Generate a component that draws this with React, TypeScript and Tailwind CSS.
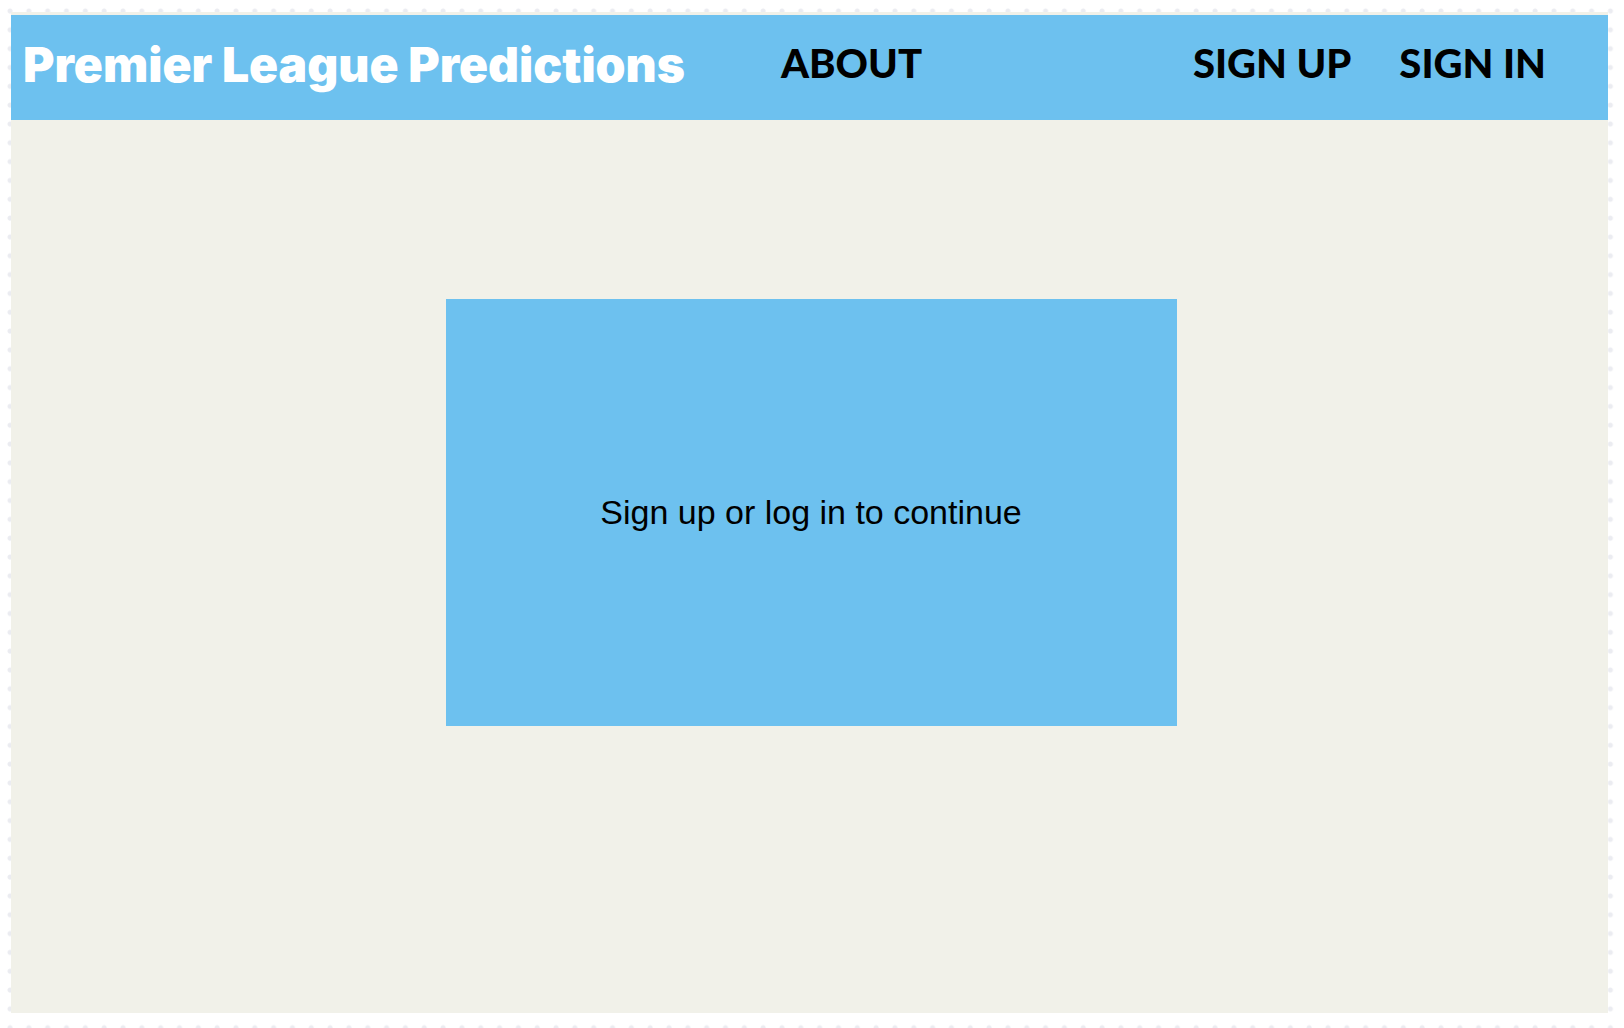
export default function App() {
  return (
    <div className="min-h-screen bg-white bg-[radial-gradient(circle_at_10px_11px,#ebecf1_2px,transparent_3px)] bg-[length:calc((100vw-4px)/86)_calc((100vw-4px)/86)] pt-3 pr-4 pb-[15px] pl-[11px]">
      <div className="flex min-h-[1001px] flex-col bg-[#f1f1e9] pt-[3px]">
        <header className="flex h-[105px] items-start bg-[#6dc1ef] pr-[62px] pl-3 whitespace-nowrap">
          <h1 className="pt-5 font-['Inter',sans-serif] text-[48px] leading-[60px] font-black text-white">
            Premier League Predictions
          </h1>
          <nav className="flex grow items-start pt-[18px] pl-24 font-['Lato',sans-serif] text-[40px] leading-[60px] font-black text-black">
            <a href="#about">ABOUT</a>
            <a href="#sign-up" className="ml-auto">
              SIGN UP
            </a>
            <a href="#sign-in" className="ml-12">
              SIGN IN
            </a>
          </nav>
        </header>
        <main className="flex justify-center pt-[179px] pl-[3px]">
          <section className="flex h-[427px] w-full max-w-[731px] items-center justify-center bg-[#6dc1ef] pb-0.5">
            <p className="font-['Liberation_Sans',Arial,sans-serif] text-[34px] leading-10 text-black">
              Sign up or log in to continue
            </p>
          </section>
        </main>
      </div>
    </div>
  );
}
